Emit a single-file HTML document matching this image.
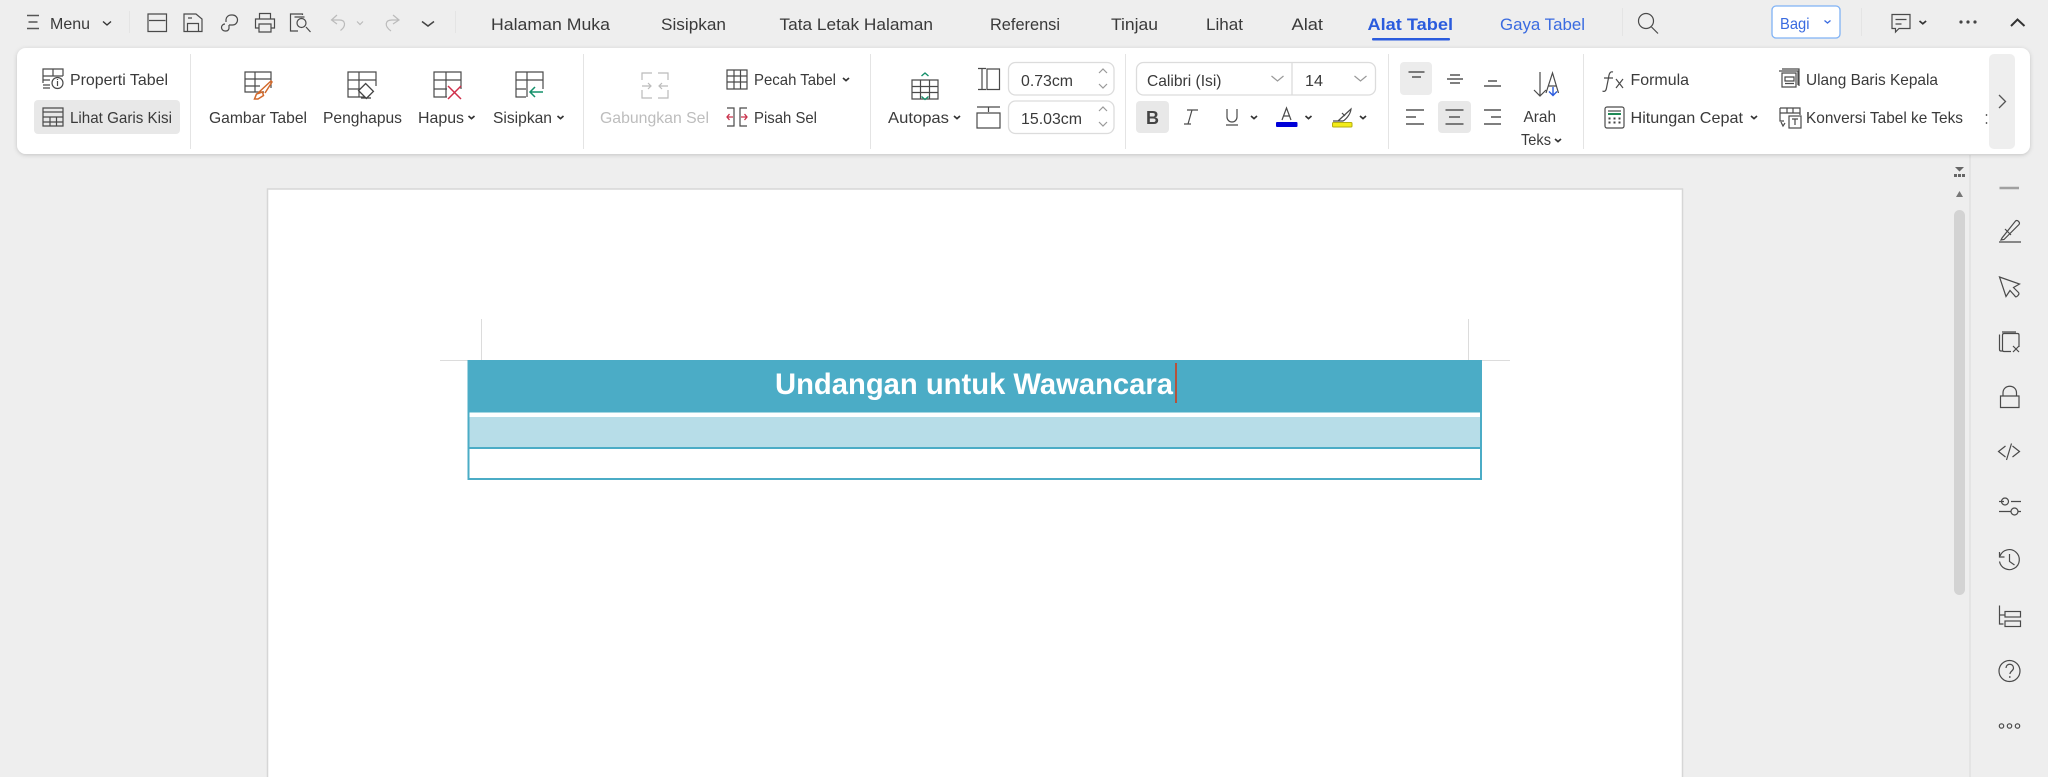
<!DOCTYPE html>
<html><head><meta charset="utf-8"><style>
html,body{margin:0;padding:0;background:#eee;width:2048px;height:777px;overflow:hidden}
svg{display:block}
text{font-family:"Liberation Sans",sans-serif;font-size:16px;fill:#3a3a3a}
.t{font-size:17px}
.i{fill:none;stroke:#4a4a4a;stroke-width:1.2}
.g{fill:none;stroke:#bbb;stroke-width:1.2}
.c{fill:none;stroke:#333;stroke-width:1.7}
.s{fill:none;stroke:#999;stroke-width:1.2}
.d{stroke:#e4e4e4;stroke-width:1}
</style></head><body>
<svg width="2048" height="777" viewBox="0 0 2048 777" xmlns="http://www.w3.org/2000/svg">
<defs><filter id="sh" x="-2%" y="-10%" width="104%" height="120%"><feDropShadow dx="0" dy="1" stdDeviation="2" flood-color="#000" flood-opacity=".18"/></filter></defs>
<rect width="2048" height="777" fill="#eee"/>

<!-- document page -->
<rect x="267.500" y="189" width="1415" height="600" fill="#fff" stroke="#d6d6d6" stroke-width="1.500"/>
<path d="M481.500 319V360M1468.500 319V360" stroke="#dcdcdc" stroke-width="1"/>
<path d="M440 360.500H468M1482 360.500H1510" stroke="#dcdcdc" stroke-width="1"/>
<rect x="467.500" y="360" width="1014.500" height="120" fill="#4bacc6"/>
<rect x="469.500" y="412.500" width="1010.500" height="4.500" fill="#fff"/>
<rect x="469.500" y="417" width="1010.500" height="30" fill="#b7dde8"/>
<rect x="469.500" y="449" width="1010.500" height="29" fill="#fff"/>
<text x="775" y="394" textLength="398" lengthAdjust="spacingAndGlyphs" style="font-size:30px;font-weight:bold;fill:#fff">Undangan untuk Wawancara</text>
<rect x="1175" y="363" width="2" height="40" fill="#b5533c"/>

<!-- scrollbar and right panel -->
<rect x="1969.500" y="155" width="1" height="622" fill="#dadada"/>
<rect x="1954" y="210" width="11" height="385" rx="5.500" fill="#d3d3d3"/>
<path d="M1955 167h9l-4.500 4.500zM1954 177v-3h3v3zM1958 177v-3h3v3zM1962 177v-3h3v3z" fill="#666"/>
<path d="M1959.500 191l3.500 6h-7z" fill="#777"/>

<path d="M1999.500 188H2019" stroke="#a0a0a0" stroke-width="2.500"/>
<g class="i">
<path d="M1999 242H2021M2002 238l-1 2 3-.5 15-15c1.500-2-1.500-5-3.500-3.500z M2005 229l6 6"/>
<path d="M1999.500 277l20 7-6 3.500 5 5c1 1 .5 2-1 3.500s-2 1-3-.5l-4.500-5-4 6z"/>
<path d="M2003 351h-2c-1 0-1.500-.500-1.500-1.500V334.500M2002 332h14M2019 347v-12c0-1-.5-1.500-1.500-1.500H2004c-1 0-1.500.5-1.500 1.500v15c0 1 .5 1.500 1.500 1.500h7M2013 346l6 6M2019 346l-6 6"/>
<path d="M2000.500 396h18.500v11.500h-18.500zM2003 396v-3c0-9 13.500-9 13.500 0v3"/>
<path d="M2005.500 446l-7 5.500 7 5.500M2012.500 446l7 5.500-7 5.500M2011.500 443.500l-5 16.500"/>
<path d="M1999 501.500h5M2011 501.500h10M1999 511.500h12M2018 511.500h3"/><circle cx="2005" cy="501.500" r="3.500"/><circle cx="2014.500" cy="511.500" r="3.500"/>
<path d="M2000 556a10 10 0 1 1-.5 5.500M1999.500 552v5h5M2009.500 554v7.500l5 3.500"/>
<path d="M1999.500 605.500V624h4"/><rect x="2005" y="611.500" width="15.500" height="5.500"/><rect x="2005" y="621" width="15.500" height="5.500"/><path d="M1999.500 615h5"/>
<circle cx="2009.500" cy="671" r="10.500"/><path d="M2006 668c0-5 7.500-5 7.500 0 0 3-3.500 3-3.500 6"/>
<circle cx="2001.500" cy="726" r="2.200"/><circle cx="2009.500" cy="726" r="2.200"/><circle cx="2017.500" cy="726" r="2.200"/>
</g>
<circle cx="2009.800" cy="677" r=".9" fill="#444"/>

<!-- top bar -->
<path d="M27 15.500h12M28.500 22h9M27 28.500h12" stroke="#555" stroke-width="1.500"/>
<text x="50" y="29" textLength="40" lengthAdjust="spacingAndGlyphs">Menu</text>
<path class="c" d="M103 21.500l4 3.500 4-3.500" style="stroke-width:1.400"/>
<path class="d" d="M129.500 11V33M455.500 11V33M1622.500 8V36M1861.500 8V36"/>
<g class="i">
<path d="M148 14h18.500v17.500H148zM149 20.500h16.500"/>
<path d="M184 14h12l6 5v12.500h-18zM187.500 31.500v-8h11v8M188 18h4"/>
<path d="M226 22v-2.500a5 5 0 0 1 5-4.500h1.500a5 5 0 0 1 0 10H229M229 25v2.500a3 3 0 0 1-3 3.500h-1a3 3 0 0 1 0-7"/>
<path d="M259.500 19v-5.500h11V19M258.500 28h-3V19h19v9h-3M259 24h12v8h-12z"/>
<path d="M298 31h-7.500V14h12v1M294.500 17h10M297 23a4.500 4.500 0 1 0 9 0a4.500 4.500 0 1 0-9 0M306 27l4.500 5"/>
</g>
<path d="M422 21.500l6 4.500 6-4.500" fill="none" stroke="#444" stroke-width="1.500"/>
<path class="g" d="M337 15l-5.500 5 5.500 4M331.500 20h8c6 0 7 6 1 10.500"/>
<path class="g" d="M357 21.500l3 3 3-3"/>
<path class="g" d="M393 15l6 5-6 4M399 20h-7c-7 0-8 6-1 11"/>

<text class="t" x="491" y="30" textLength="119" lengthAdjust="spacingAndGlyphs">Halaman Muka</text>
<text class="t" x="661" y="30" textLength="65" lengthAdjust="spacingAndGlyphs">Sisipkan</text>
<text class="t" x="779.500" y="30" textLength="153.500" lengthAdjust="spacingAndGlyphs">Tata Letak Halaman</text>
<text class="t" x="990" y="30" textLength="70" lengthAdjust="spacingAndGlyphs">Referensi</text>
<text class="t" x="1111" y="30" textLength="47" lengthAdjust="spacingAndGlyphs">Tinjau</text>
<text class="t" x="1206" y="30" textLength="37" lengthAdjust="spacingAndGlyphs">Lihat</text>
<text class="t" x="1291.500" y="30" textLength="31.500" lengthAdjust="spacingAndGlyphs">Alat</text>
<text class="t" x="1367.500" y="30" textLength="85.500" lengthAdjust="spacingAndGlyphs" style="font-weight:bold;fill:#2a5bdd">Alat Tabel</text>
<rect x="1372" y="38" width="78" height="2.500" rx="1" fill="#2a5bdd"/>
<text class="t" x="1500" y="30" textLength="85" lengthAdjust="spacingAndGlyphs" style="fill:#3a6be0">Gaya Tabel</text>
<circle cx="1646" cy="21" r="7.500" class="i"/><path class="i" d="M1651.500 27l6.500 6.500"/>
<rect x="1772" y="6" width="68" height="32" rx="4" fill="#fff" stroke="#7fb2f5" stroke-width="1.300"/>
<text x="1780" y="29" textLength="29.500" lengthAdjust="spacingAndGlyphs" style="fill:#3a6be0">Bagi</text>
<path d="M1824.500 20.500l3 2.500 3-2.500" fill="none" stroke="#3a6be0" stroke-width="1.300"/>
<path class="i" d="M1892 14.500h18v14h-11l-3.500 3.500v-3.500H1892zM1895.500 19.500h11M1895.500 24h6"/>
<path class="c" d="M1919.500 21l3.300 2.800 3.300-2.800"/>
<circle cx="1961" cy="22" r="1.600" fill="#444"/><circle cx="1968" cy="22" r="1.600" fill="#444"/><circle cx="1975" cy="22" r="1.600" fill="#444"/>
<path d="M2011 26l6.500-6.500 7 6.500" fill="none" stroke="#333" stroke-width="2"/>

<!-- ribbon -->
<rect x="17" y="48" width="2013" height="106" rx="9" fill="#fff" filter="url(#sh)"/>
<path class="d" d="M190.500 54V149M583.500 54V149M870.500 54V149M1125.500 54V149M1388.500 54V149M1583.500 54V149"/>
<rect x="34" y="100" width="146" height="34" rx="4" fill="#e8e8e8"/>
<rect x="1136" y="101" width="33" height="32" rx="4" fill="#e8e8e8"/>
<rect x="1400" y="62" width="32" height="33" rx="4" fill="#ececec"/>
<rect x="1438" y="101" width="33" height="32" rx="4" fill="#e8e8e8"/>
<rect x="1989" y="54" width="26" height="95" rx="5" fill="#eee"/>
<path d="M1999 95l6.500 6.500-6.500 6.500" fill="none" stroke="#555" stroke-width="1.300"/>

<!-- ribbon text -->
<text x="70" y="85" textLength="98" lengthAdjust="spacingAndGlyphs">Properti Tabel</text>
<text x="70" y="123" textLength="102" lengthAdjust="spacingAndGlyphs">Lihat Garis Kisi</text>
<text x="209" y="123" textLength="98" lengthAdjust="spacingAndGlyphs">Gambar Tabel</text>
<text x="323" y="123" textLength="79" lengthAdjust="spacingAndGlyphs">Penghapus</text>
<text x="418" y="123" textLength="46" lengthAdjust="spacingAndGlyphs">Hapus</text>
<text x="493" y="123" textLength="59" lengthAdjust="spacingAndGlyphs">Sisipkan</text>
<text x="600" y="123" textLength="109" lengthAdjust="spacingAndGlyphs" style="fill:#bdbdbd">Gabungkan Sel</text>
<text x="754" y="85" textLength="82" lengthAdjust="spacingAndGlyphs">Pecah Tabel</text>
<text x="754" y="123" textLength="63" lengthAdjust="spacingAndGlyphs">Pisah Sel</text>
<text x="888" y="123" textLength="61" lengthAdjust="spacingAndGlyphs">Autopas</text>
<text x="1523.500" y="122" textLength="32.500" lengthAdjust="spacingAndGlyphs">Arah</text>
<text x="1521" y="145" textLength="30" lengthAdjust="spacingAndGlyphs">Teks</text>
<text x="1630.500" y="85" textLength="58.500" lengthAdjust="spacingAndGlyphs">Formula</text>
<text x="1630.500" y="123" textLength="112.500" lengthAdjust="spacingAndGlyphs">Hitungan Cepat</text>
<text x="1806" y="85" textLength="132" lengthAdjust="spacingAndGlyphs">Ulang Baris Kepala</text>
<text x="1806" y="123" textLength="157" lengthAdjust="spacingAndGlyphs">Konversi Tabel ke Teks</text>
<path d="M1986.500 114v2M1986.500 122v2" stroke="#666" stroke-width="1.400"/>

<!-- dropdown chevrons -->
<g class="c">
<path d="M468.500 116l3 2.600 3-2.600M557.500 116l3 2.600 3-2.600M843 78l3 2.600 3-2.600M954 116l3 2.600 3-2.600M1251 116l3 2.600 3-2.600M1305.500 116l3 2.600 3-2.600M1360 116l3 2.600 3-2.600M1555 139l3 2.600 3-2.600M1751 116l3 2.600 3-2.600"/>
</g>

<!-- inputs -->
<rect x="1008.500" y="62.500" width="105.500" height="32.500" rx="7" fill="#fff" stroke="#dcdcdc" stroke-width="1.300"/>
<rect x="1008.500" y="101" width="105.500" height="32.500" rx="7" fill="#fff" stroke="#dcdcdc" stroke-width="1.300"/>
<text x="1021" y="86" textLength="52" lengthAdjust="spacingAndGlyphs">0.73cm</text>
<text x="1021" y="124" textLength="61" lengthAdjust="spacingAndGlyphs">15.03cm</text>
<path class="s" d="M1099 73l4-4 4 4M1099 84l4 4 4-4M1099 111l4-4 4 4M1099 122l4 4 4-4"/>
<rect x="1136.500" y="62.500" width="239" height="32.500" rx="7" fill="#fff" stroke="#dcdcdc" stroke-width="1.300"/>
<path d="M1292 62.500V95" stroke="#dcdcdc" stroke-width="1.300"/>
<text x="1147" y="86" textLength="74.500" lengthAdjust="spacingAndGlyphs">Calibri (Isi)</text>
<text x="1305" y="86" textLength="18" lengthAdjust="spacingAndGlyphs">14</text>
<path class="s" d="M1271.500 76l6 5 6-5M1354.500 76l6 5 6-5"/>
<text x="1146" y="124" textLength="13" lengthAdjust="spacingAndGlyphs" style="font-size:18px;font-weight:bold;fill:#444">B</text>
<g class="i">
<path d="M1187 110h11M1192 110l-4 14M1184 124h7"/>
<path d="M1227 109v8a5 5 0 0 0 10 0v-8M1226 125h12"/>
<path d="M1282 120l4.500-12 4.500 12M1283.500 116h6"/>
<path d="M1338 121l13-12c-.5 6-6 11-8 12zM1333 121h10M1342 113l3 3"/>
</g>
<rect x="1276" y="122" width="21.500" height="5" rx="1" fill="#0000d8"/>
<rect x="1332.500" y="122.500" width="19.500" height="4.500" rx="1" fill="#f3ec19" stroke="#b5ae10"/>

<!-- align -->
<path stroke="#555" stroke-width="1.400" fill="none" d="M1408.500 72h16M1412 77h9M1450 75h10M1447 79h16M1450 83h10M1488 81h9M1484 86h17M1406 110h18M1406 117h10M1406 124h18M1445.500 110h18M1449 117h11M1445.500 124h18M1484 110h17M1491 117h10M1484 124h17"/>

<!-- table icons -->
<g class="i">
<path d="M43 83V69h20v7M43 76h20M53 69v7M43 80h7M43 85h7M43 88h7"/><circle cx="57.500" cy="83" r="5.500"/><path d="M57.500 81v5M57.500 79v1"/>
<path d="M43 108h20v18H43zM43 112h20M43 117h20M43 122h20M50 117v9M56.500 117v9"/>
<path d="M264 92H245V72h26v16M245 79h26M245 86h15M255 72v20"/>
<path d="M376 86V72h-28v25h19M348 80h28M348 89h19M359 72v25"/>
<path d="M461 89V72h-27v25h13M434 80h27M434 89h13M446 72v25"/>
<path d="M543 89V72h-27v25h10M516 80h27M516 89h10M527 72v25"/>
<path d="M727 70h20v19h-20zM727 76h20M727 82h20M734 70v19M740.500 70v19"/>
<path d="M727 108h7v18h-7M747 108h-7v18h7M734 108v18M740 108v18"/>
<path d="M912 80h26v19h-26zM912 86.500h26M912 92.500h26M920.500 80v19M929.500 80v19"/>
<path d="M978 68.500h8M978 89.500h8M982 68.500v21M987 69h12.500v20.500H987z"/>
<path d="M977 107h23M988.500 107v5M977 113h23v15h-23z"/>
<path d="M1540 72v24m-6-6l6 6 6-6M1546 93l6.500-20 6 20M1548.500 86h8"/>
<path d="M1613 72c-3-1-4 2-4.500 6l-2 10c-.5 3-2 4-4 3M1604 78h9"/>
<path d="M1616 79l7 9M1623 79l-7 9"/>
<rect x="1605" y="107" width="19" height="21" rx="2"/><path d="M1608 111h13"/>
<path d="M1779 71h19v14M1782 69h17v17M1782 73h14v14h-14zM1785 77h9v4h-9zM1785 83.500h9"/>
<path d="M1780 108h20v7M1780 108v12M1780 113h20M1787 108v5M1793 108v5M1780 116v5h4"/><rect x="1789" y="116" width="12" height="12"/><path d="M1792 119h6M1795 119v6M1781 122l2 4 2-3"/>
</g>
<path d="M1608 114h13" stroke="#1f8a55" stroke-width="2"/>
<path d="M1608.500 118.500h2M1613.500 118.500h2M1618.500 118.500h2M1608.500 122.500h2M1613.500 122.500h2M1618.500 122.500h2" stroke="#444" stroke-width="2"/>

<!-- coloured accents -->
<path d="M258 99h-3.500l2-5 6-2 1 3.500zM258 93l13-12 1 1-7 11" fill="none" stroke="#d2692b" stroke-width="1.500"/>
<rect x="360.500" y="86" width="11" height="10" transform="rotate(45 366 91)" fill="#fff" stroke="#444" stroke-width="1.300"/>
<path d="M361 98h10" stroke="#444" stroke-width="1.300"/>
<path d="M448 86l13 13M461 86l-13 13" stroke="#cf2f4a" stroke-width="1.500"/>
<path d="M543 92h-13m5-5l-5 5 5 5" fill="none" stroke="#14906a" stroke-width="1.500"/>
<path class="g" d="M642 80v-7h10M658 73h10v7M642 90v8h10M658 98h10v-8M642 86h9m-3-3l3 3-3 3M668 86h-9m3-3l-3 3 3 3"/>
<path d="M733 117h-6m2.500-3l-2.500 3 2.500 3M741 117h6m-2.500-3l2.500 3-2.500 3" fill="none" stroke="#c9304a" stroke-width="1.300"/>
<path d="M921.500 76l3.500-3 3.500 3M921.500 96.500l3.500 3 3.500-3" fill="none" stroke="#14906a" stroke-width="1.400"/>
<path d="M1553 87v8m-4-3.500l4 4 4-4" fill="none" stroke="#2a5bdd" stroke-width="1.400"/>
</svg>
</body></html>
